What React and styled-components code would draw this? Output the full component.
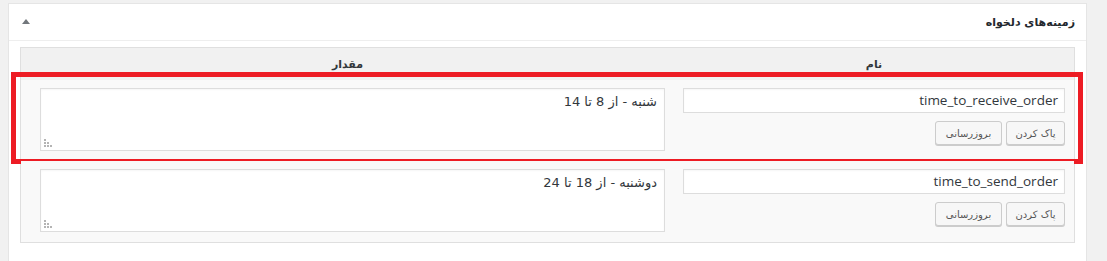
import React from "react"
import styled, { createGlobalStyle } from 'styled-components'

const GlobalStyle = createGlobalStyle`
  html, body {
    margin: 0;
    padding: 0;
    background: #f1f1f1;
  }
  body {
    font-family: 'DejaVu Sans', sans-serif;
    color: #23282d;
  }
`

const Page = styled.div`
  padding: 3px 20px 0 8px;
  height: 258px;
  overflow: hidden;
`

const Box = styled.div`
  background: #fff;
  border: 1px solid #e5e5e5;
  min-height: 300px;
  direction: rtl;
`

const BoxHeader = styled.div`
  height: 36px;
  border-bottom: 1px solid #eee;
  display: flex;
  align-items: center;
  justify-content: space-between;
  padding: 0 11px 0 13px;
`

const BoxTitle = styled.h2`
  margin: 0;
  font-size: 11px;
  font-weight: bold;
  color: #23282d;
`

const Toggle = styled.span`
  width: 0;
  height: 0;
  border-left: 4px solid transparent;
  border-right: 4px solid transparent;
  border-bottom: 5px solid #72777c;
  margin-bottom: 2px;
`

const Inside = styled.div`
  padding: 6px 11px 0;
`

const Table = styled.div`
  border: 1px solid #dfdfdf;
  display: grid;
  grid-template-columns: 400px 1fr;
`

const HeadCell = styled.div`
  height: 32px;
  background: #f1f1f1;
  display: flex;
  align-items: center;
  justify-content: center;
  font-size: 11px;
  font-weight: bold;
  color: #32373c;
`

const Row = styled.div`
  grid-column: 1 / -1;
  display: grid;
  grid-template-columns: 400px 1fr;
  background: #f9f9f9;
  position: relative;
  padding: 8px 0 10px;

  &::after {
    content: ${p => (p.$highlighted ? "''" : "none")};
    position: absolute;
    top: -8px;
    left: -10px;
    right: -9px;
    bottom: -3px;
    border: 5px solid #ed1c24;
    pointer-events: none;
  }
`

const NameCell = styled.div`
  padding: 0 9px;
  display: flex;
  flex-direction: column;
  gap: 8px;
`

const ValueCell = styled.div`
  padding: 0 9px 0 19px;
`

const NameInput = styled.div`
  height: 23px;
  border: 1px solid #ddd;
  background: #fff;
  box-shadow: inset 0 1px 2px rgba(0, 0, 0, 0.04);
  font-family: 'Open Sans', sans-serif;
  font-size: 13.5px;
  line-height: 23px;
  padding: 0 6px;
  color: #32373c;
  direction: ltr;
  text-align: right;
`

const Buttons = styled.div`
  display: flex;
  gap: 4px;
`

const Button = styled.button`
  height: 24px;
  padding: 0 6px;
  border: 1px solid #ccc;
  border-radius: 3px;
  background: #f7f7f7;
  box-shadow: 0 1px 0 #ccc;
  font-family: 'DejaVu Sans', sans-serif;
  font-size: 10px;
  color: #555;
  direction: rtl;
  min-width: ${p => p.$min || 0}px;
`

const ValueArea = styled.div`
  height: 61px;
  border: 1px solid #ddd;
  background: #fff;
  box-shadow: inset 0 1px 2px rgba(0, 0, 0, 0.04);
  padding: 0 7px;
  font-size: 13px;
  line-height: 26px;
  color: #32373c;
  position: relative;
`

const Grip = styled.svg`
  position: absolute;
  left: 3px;
  bottom: 2px;
`

const ResizeGrip = () => (
  <Grip width="10" height="9" viewBox="0 0 10 9">
    <rect x="0" y="0" width="2" height="2" fill="#b4b4b4" />
    <rect x="0" y="3" width="2" height="2" fill="#b4b4b4" />
    <rect x="3" y="3" width="2" height="2" fill="#b4b4b4" />
    <rect x="0" y="6" width="2" height="2" fill="#b4b4b4" />
    <rect x="3" y="6" width="2" height="2" fill="#b4b4b4" />
    <rect x="6" y="6" width="2" height="2" fill="#b4b4b4" />
  </Grip>
)

const fields = [
  { name: "time_to_receive_order", value: "شنبه - از 8 تا 14", highlighted: true },
  { name: "time_to_send_order", value: "دوشنبه - از 18 تا 24" },
]

const App = () => {
  return (
    <>
      <GlobalStyle />
      <Page>
        <Box>
          <BoxHeader>
            <BoxTitle>زمینه‌های دلخواه</BoxTitle>
            <Toggle />
          </BoxHeader>
          <Inside>
            <Table>
              <HeadCell>نام</HeadCell>
              <HeadCell>مقدار</HeadCell>
              {fields.map(f => (
                <Row key={f.name} $highlighted={f.highlighted}>
                  <NameCell>
                    <NameInput>{f.name}</NameInput>
                    <Buttons>
                      <Button $min={59}>پاک کردن</Button>
                      <Button $min={67}>بروزرسانی</Button>
                    </Buttons>
                  </NameCell>
                  <ValueCell>
                    <ValueArea>
                      {f.value}
                      <ResizeGrip />
                    </ValueArea>
                  </ValueCell>
                </Row>
              ))}
            </Table>
          </Inside>
        </Box>
      </Page>
    </>
  )
}

export default App
